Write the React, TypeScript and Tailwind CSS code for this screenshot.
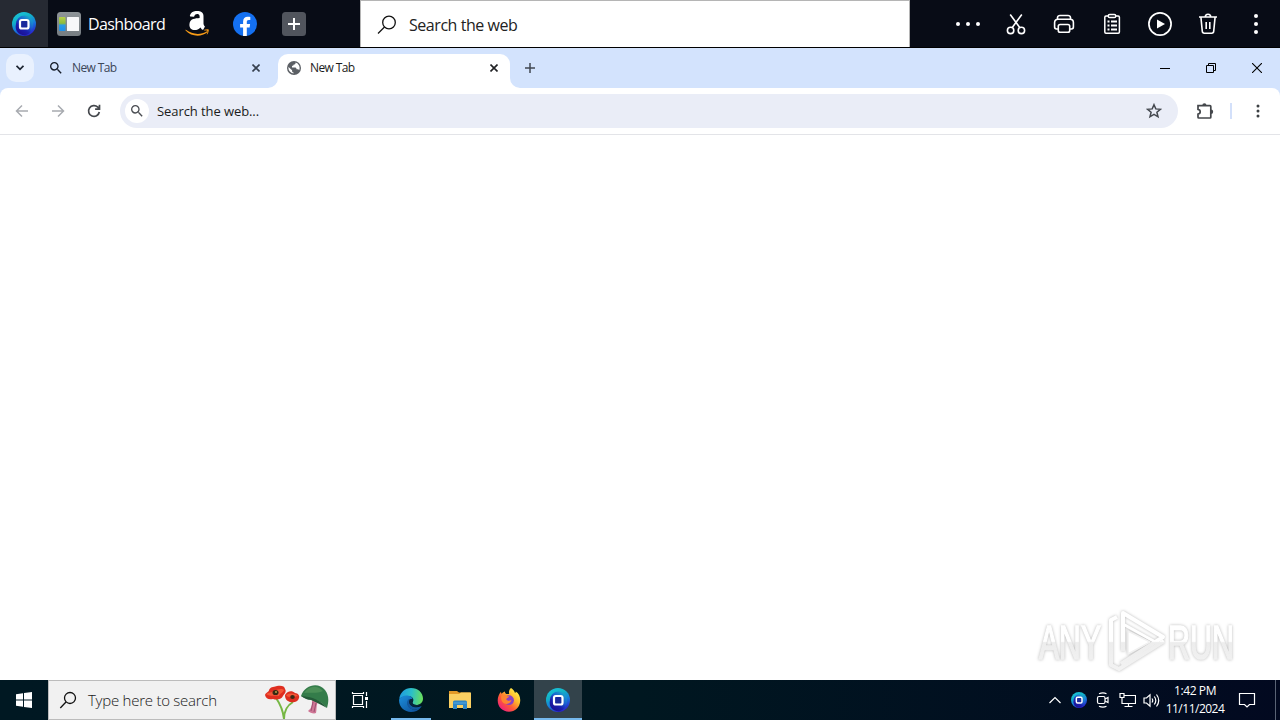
import type { ReactNode } from 'react';

type IconProps = { className?: string };

function Stroke({ className = '', size = 24, width = 1.6, children }: { className?: string; size?: number; width?: number; children: ReactNode }) {
  return (
    <svg className={`shrink-0 ${className}`} width={size} height={size} viewBox={`0 0 ${size} ${size}`} fill="none" stroke="currentColor" strokeWidth={width}>
      {children}
    </svg>
  );
}

function BrowserLogo({ id, size }: { id: string; size: number }) {
  return (
    <svg className="shrink-0" width={size} height={size} viewBox="0 0 24 24">
      <defs>
        <linearGradient id={`${id}-ring`} x1="0.200" y1="0" x2="0.650" y2="1">
          <stop offset="0" stopColor="#1cc3dc" />
          <stop offset="0.300" stopColor="#12b4c6" />
          <stop offset="0.600" stopColor="#1680da" />
          <stop offset="1" stopColor="#2b1ccc" />
        </linearGradient>
        <linearGradient id={`${id}-core`} x1="0.800" y1="0" x2="0.200" y2="0.900">
          <stop offset="0" stopColor="#18b0c8" />
          <stop offset="0.400" stopColor="#1b62d0" />
          <stop offset="0.700" stopColor="#1a1fae" />
          <stop offset="1" stopColor="#1c0f92" />
        </linearGradient>
      </defs>
      <circle cx="12" cy="12" r="12" fill={`url(#${id}-ring)`} />
      <path d="M4 12a8.500 8.500 0 0 1 17 0c0 6-3 10-8 11.500C6 23 2.500 18 4 12z" fill={`url(#${id}-core)`} />
      <rect x="8" y="8" width="8.500" height="8.500" rx="1.800" fill="#1a2a9c" stroke="#fff" strokeWidth="2.200" />
    </svg>
  );
}

function DashboardIcon() {
  return (
    <svg className="shrink-0" width="24" height="24" viewBox="0 0 24 24">
      <defs>
        <linearGradient id="dash" x1="0" y1="0" x2="0" y2="1">
          <stop offset="0" stopColor="#8e9498" />
          <stop offset="1" stopColor="#777d82" />
        </linearGradient>
        <linearGradient id="dash-tiles" x1="0" y1="0" x2="0" y2="1">
          <stop offset="0" stopColor="#b6cf4a" />
          <stop offset="0.450" stopColor="#8dbb3a" />
          <stop offset="0.580" stopColor="#2a9ae6" />
          <stop offset="1" stopColor="#1f8fe8" />
        </linearGradient>
      </defs>
      <rect width="24" height="24" rx="3.500" fill="url(#dash)" />
      <rect x="2" y="5" width="6.500" height="14" rx="1" fill="url(#dash-tiles)" />
      <rect x="10" y="5" width="12" height="14" rx="0.500" fill="#f7f7f9" />
    </svg>
  );
}

function AmazonIcon() {
  return (
    <svg className="shrink-0" width="24" height="26" viewBox="0 0 24 26">
      <path d="M14.600 10.600c0 1.500 0 2.700-.7 4-.6 1.100-1.500 1.700-2.500 1.700-1.400 0-2.200-1.100-2.200-2.600 0-3.100 2.800-3.700 5.400-3.700zm3.600 8.100c-.2.200-.6.200-.8.100-1.200-1-1.400-1.400-2-2.300-1.900 2-3.300 2.500-5.800 2.500-3 0-5.200-1.800-5.200-5.300 0-2.800 1.500-4.700 3.700-5.600 1.900-.8 4.500-1 6.500-1.200v-.5c0-.8.1-1.800-.4-2.500-.4-.7-1.200-.9-2-.9-1.300 0-2.500.7-2.800 2.100-.1.300-.3.600-.6.600L5.400 5.400c-.3-.1-.6-.3-.5-.8C5.700.900 9.100-.1 12.200-.1c1.600 0 3.600.4 4.900 1.600 1.600 1.500 1.400 3.400 1.400 5.600v5.100c0 1.500.6 2.200 1.200 3 .2.300.3.600 0 .8z" fill="#fff" />
      <path d="M.900 18.800c6.500 4.800 14.500 5.500 21 1.500.7-.4 1.200.4.500 1C16 26.500 6 25.600.600 19.500c-.4-.5-.1-.9.300-.7z" fill="#f79b16" />
      <path d="M19.300 18.800c1.200-.7 3.800-.9 4.300-.3.500.7-.2 3.800-1.500 5-.2.200-.5.100-.4-.2.400-1 1-2.900.7-3.400-.4-.5-2-.4-3-.3-.3 0-.5-.500-.1-.8z" fill="#f79b16" />
    </svg>
  );
}

function FacebookIcon() {
  return (
    <svg className="shrink-0" width="24" height="24" viewBox="0 0 24 24">
      <circle cx="12" cy="12" r="12" fill="#1470f0" />
      <path d="M10.100 23.900v-8.400H7.100v-3.500h3V9.400c0-3 1.800-4.700 4.500-4.700 1.300 0 2.700.2 2.700.2v3h-1.500c-1.500 0-2 .9-2 1.900V12h3.300l-.5 3.500h-2.800v8.400z" fill="#fff" />
    </svg>
  );
}

function PlusTile() {
  return (
    <svg className="shrink-0" width="24" height="24" viewBox="0 0 24 24">
      <rect width="24" height="24" rx="3.500" fill="#51555d" />
      <path d="M12 6v12M6 12h12" stroke="#fff" strokeWidth="2" />
    </svg>
  );
}

function ThinSearch({ className = '' }: IconProps) {
  return (
    <Stroke className={className} size={20} width={1.300}>
      <circle cx="12" cy="7.500" r="6.300" />
      <path d="M7.500 12L1 18.500" />
    </Stroke>
  );
}

function Magnifier({ size, color }: { size: number; color: string }) {
  return (
    <svg className="shrink-0" width={size} height={size} viewBox="3 3 18 18" fill={color}>
      <path d="M15.500 14h-.79l-.28-.27A6.470 6.470 0 0 0 16 9.500 6.500 6.500 0 1 0 9.500 16c1.610 0 3.090-.59 4.230-1.570l.27.28v.79l5 4.990L20.490 19l-4.990-5zm-6 0C7.010 14 5 11.990 5 9.500S7.010 5 9.500 5 14 7.010 14 9.500 11.990 14 9.500 14z" />
    </svg>
  );
}

function Dots() {
  return (
    <svg width="26" height="24" viewBox="0 0 26 24" fill="#fff">
      <circle cx="3" cy="12" r="2" /><circle cx="13" cy="12" r="2" /><circle cx="23" cy="12" r="2" />
    </svg>
  );
}

function Scissors() {
  return (
    <Stroke>
      <circle cx="6.600" cy="18.400" r="3.200" />
      <circle cx="17.400" cy="18.400" r="3.200" />
      <path d="M6.200 2.500l9.700 13.200M17.800 2.500L8.100 15.700" />
    </Stroke>
  );
}

function Printer() {
  return (
    <Stroke>
      <path d="M5.500 7V5.500Q5.800 3.500 8 3.500h8q2.200 0 2.500 2V7M6 17H4.500A2 2 0 0 1 2.600 15v-4.500a3.300 3.300 0 0 1 3.300-3.300h12.200a3.300 3.300 0 0 1 3.300 3.300V15a2 2 0 0 1-1.900 2H18" />
      <rect x="6.300" y="12.500" width="11.400" height="7.800" rx="1.800" />
    </Stroke>
  );
}

function Clipboard() {
  return (
    <Stroke width={1.500}>
      <rect x="4.800" y="4" width="14.600" height="17.200" rx="1.200" />
      <rect x="8.300" y="2.500" width="7.400" height="3" rx="1.300" fill="#080c16" />
      <path d="M7.500 9.500h2M7.500 13.500h2M7.500 17.500h2M11 9.500h6M11 13.500h6M11 17.500h6" strokeWidth="1.800" />
    </Stroke>
  );
}

function PlayCircle() {
  return (
    <Stroke width={1.700}>
      <circle cx="12" cy="12" r="11.100" />
      <path d="M9 7.500v9l8-4.500z" fill="#fff" stroke="none" />
    </Stroke>
  );
}

function Trash() {
  return (
    <Stroke>
      <path d="M3 5h18M9.300 5a2.700 2.700 0 0 1 5.400 0M4.900 5l1.400 14.300a2 2 0 0 0 2 1.900h7.400a2 2 0 0 0 2-1.900L19.100 5M10.200 10v7M13.800 10v7" />
    </Stroke>
  );
}

function VerticalDots() {
  return (
    <svg width="24" height="24" viewBox="0 0 24 24" fill="#fff">
      <circle cx="12" cy="4" r="2" /><circle cx="12" cy="12" r="2" /><circle cx="12" cy="20" r="2" />
    </svg>
  );
}

function CloseIcon({ color }: { color: string }) {
  return (
    <svg className="shrink-0" width="8" height="8" viewBox="0 0 8 8" stroke={color} strokeWidth="1.600">
      <path d="M.500.500l7 7M7.500.500l-7 7" />
    </svg>
  );
}

function TabFoot({ side }: { side: 'left' | 'right' }) {
  return (
    <svg className="shrink-0 self-end" width="10" height="10" viewBox="0 0 10 10" fill="#fff">
      <path d={side === 'left' ? 'M10 0v10H0A10 10 0 0 0 10 0z' : 'M0 0v10h10A10 10 0 0 1 0 0z'} />
    </svg>
  );
}

function Slot({ children, className = '' }: { children: ReactNode; className?: string }) {
  return <div className={`flex h-full w-12 shrink-0 items-center justify-center ${className}`}>{children}</div>;
}

function Launcher() {
  return (
    <header className="flex h-12 shrink-0 border-b border-black bg-[#080c16] text-white">
      <Slot className="bg-[#262a33] pt-px"><BrowserLogo id="launch" size={24} /></Slot>
      <div className="flex w-[125px] items-center gap-[7px] pl-[9px] pt-px">
        <DashboardIcon />
        <span className="whitespace-nowrap font-['Open_Sans',sans-serif] text-[16px] tracking-[-0.600px]">Dashboard</span>
      </div>
      <Slot className="pt-px"><AmazonIcon /></Slot>
      <Slot className="pt-px"><FacebookIcon /></Slot>
      <Slot className="ml-px pt-px"><PlusTile /></Slot>
      <div className="ml-[42px] flex w-[550px] items-center gap-[12px] border-l border-r border-t border-[#b5b5b5] bg-white pl-[16px] pt-px text-[#222]">
        <ThinSearch className="text-[#111]" />
        <span className="pt-px font-['Open_Sans',sans-serif] text-[16px] tracking-[-0.450px]">Search the web</span>
      </div>
      <div className="ml-auto flex pt-px">
        <Slot><Dots /></Slot>
        <Slot><Scissors /></Slot>
        <Slot><Printer /></Slot>
        <Slot><Clipboard /></Slot>
        <Slot><PlayCircle /></Slot>
        <Slot><Trash /></Slot>
        <Slot><VerticalDots /></Slot>
      </div>
    </header>
  );
}

function TabStrip() {
  return (
    <div className="flex h-10 shrink-0 items-center bg-[#d3e3fd]">
      <button className="ml-[6px] flex h-7 w-7 items-center justify-center rounded-[10px] bg-[#e9f1fe]">
        <svg width="8" height="6" viewBox="0 0 8 6" fill="none" stroke="#1c2430" strokeWidth="1.800"><path d="M.500.800L4 4.300 7.500.800" /></svg>
      </button>
      <div className="ml-[16px] flex w-[210px] items-center">
        <Magnifier size={12} color="#161c28" />
        <span className="ml-[10px] font-['Open_Sans',sans-serif] text-[12px] tracking-[-0.600px] text-[#3b4658]">New Tab</span>
        <span className="ml-auto"><CloseIcon color="#36404f" /></span>
      </div>
      <div className="ml-2 flex h-full">
        <TabFoot side="left" />
        <div className="mt-[6px] flex w-[232px] items-center rounded-t-[10px] bg-white pb-[6px] pl-[9px] pr-[12px]">
          <svg className="shrink-0" width="14" height="14" viewBox="0 0 14 14">
            <circle cx="7" cy="7" r="7" fill="#5b5f64" />
            <path d="M8.500 1.600c.2 1.300-.6 1.900-1.800 2-.2 1-.6 1.400-1.700 1.500v1.300h3.400c.8.200 1.200.9 1.200 1.900h1.200c.7.100 1 .5 1.300 1A5.600 5.600 0 0 0 8.500 1.600zM1.500 6l3.600 3.300v1c.1.900.700 1.100 1.400 1.200v1A5.600 5.600 0 0 1 1.500 6z" fill="#fff" />
          </svg>
          <span className="ml-[9px] font-['Open_Sans',sans-serif] text-[12px] tracking-[-0.600px] text-[#1b1b1b]">New Tab</span>
          <span className="ml-auto"><CloseIcon color="#202124" /></span>
        </div>
        <TabFoot side="right" />
      </div>
      <svg className="ml-[5px]" width="10" height="10" viewBox="0 0 10 10" stroke="#414852" strokeWidth="1.500"><path d="M5 0v10M0 5h10" /></svg>
      <div className="ml-auto flex">
        <div className="flex w-[46px] justify-center"><svg width="10" height="10" viewBox="0 0 10 10" stroke="#000"><path d="M0 5.500h10" /></svg></div>
        <div className="flex w-[46px] justify-center"><svg width="10" height="10" viewBox="0 0 10 10" stroke="#000" fill="none"><path d="M.500 2.500h7v7h-7zM2.500 2.500v-2h7v7h-2" /></svg></div>
        <div className="flex w-[46px] justify-center"><svg width="10" height="10" viewBox="0 0 10 10" stroke="#000" strokeWidth="1.100"><path d="M0 0l10 10M10 0L0 10" /></svg></div>
      </div>
    </div>
  );
}

function Toolbar() {
  return (
    <div className="shrink-0 bg-[#d3e3fd]">
      <div className="flex h-[47px] items-center rounded-t-[8px] border-b border-[#e3e4e8] bg-white">
        <Stroke className="ml-[15px] text-[#a8abb0]" size={14} width={1.500}><path d="M13 7H2M7 1.500L1.500 7 7 12.500" /></Stroke>
        <Stroke className="ml-[22px] text-[#a8abb0]" size={14} width={1.500}><path d="M1 7h11M7 1.500L12.500 7 7 12.500" /></Stroke>
        <Stroke className="ml-[22px] text-[#45484d]" size={14} width={1.700}><path d="M12.300 8A5.400 5.400 0 1 1 10.800 3.200L12.300 4.700M12.500.800v4.400H8.100" /></Stroke>
        <div className="ml-[19px] flex h-[34px] w-[1058px] items-center rounded-full bg-[#eaedf7] pl-[5px] pr-[16px]">
          <span className="flex h-6 w-6 items-center justify-center rounded-full bg-white"><Magnifier size={12} color="#4a4d52" /></span>
          <span className="ml-2 pt-px font-['Open_Sans',sans-serif] text-[13px] tracking-[-0.080px] text-[#1b1c20]">Search the web...</span>
          <Stroke className="ml-auto text-[#44484f]" size={16} width={1.500}><path d="M8 1.700l1.800 4.200 4.600.4-3.500 3 1.100 4.500L8 11.400l-4 2.400 1.100-4.500-3.500-3 4.600-.4z" /></Stroke>
        </div>
        <Stroke className="ml-[18px] text-[#44474b]" size={18} width={1.700}>
          <path d="M2 3.600h12q.8 0 .8.800v10.800q0 .8-.8.800H2.800q-.8 0-.8-.8v-3q2.200-.4 2.200-2.400T2 7.400z" />
          <path d="M6.300 3.400a2.100 2.100 0 0 1 4.200 0zM15 7.600a2.200 2.200 0 0 1 0 4.400z" fill="currentColor" stroke="none" />
        </Stroke>
        <span className="ml-[16px] h-4 w-[2px] bg-[#d3e0fa]" />
        <svg className="ml-[24px]" width="4" height="14" viewBox="0 0 4 14" fill="#3c4043"><circle cx="2" cy="2" r="1.500" /><circle cx="2" cy="7" r="1.500" /><circle cx="2" cy="12" r="1.500" /></svg>
      </div>
    </div>
  );
}

function Watermark() {
  return (
    <svg className="absolute bottom-[7px] right-[30px] drop-shadow-[0_0_1.500px_rgba(0,0,0,0.280)]" width="214" height="66" viewBox="0 0 214 66">
      <defs>
        <linearGradient id="mark" gradientUnits="userSpaceOnUse" x1="0" y1="0" x2="0" y2="66">
          <stop offset="0" stopColor="#fff" />
          <stop offset="0.520" stopColor="#fff" />
          <stop offset="0.540" stopColor="#ededed" />
          <stop offset="1" stopColor="#f3f3f3" />
        </linearGradient>
      </defs>
      <g fill="url(#mark)" stroke="url(#mark)" strokeWidth="1.500" fontFamily="Liberation Sans Narrow, Liberation Sans, sans-serif" fontSize="49">
        <text x="3" y="52" textLength="62" lengthAdjust="spacingAndGlyphs">ANY</text>
        <text x="132" y="52" textLength="66" lengthAdjust="spacingAndGlyphs">RUN</text>
      </g>
      <g fill="none" stroke="url(#mark)" strokeWidth="4" strokeLinejoin="round">
        <path d="M87 44V6l40 24-42 27" />
        <path d="M81 10l-6 3v45l8 4 45-28" />
        <path d="M87 17l36 20" strokeWidth="3" />
        <path d="M92 24v23l22-12z" fill="#fff" stroke="#f1f1f1" strokeWidth="1.500" />
      </g>
    </svg>
  );
}

function Flowers() {
  return (
    <svg className="shrink-0" width="66" height="34" viewBox="0 0 66 34">
      <path d="M12 13c5 7 7 12 8 21M29 17c-7 4-9 10-9 17" stroke="#76b744" strokeWidth="2" fill="none" />
      <path d="M1 10c1-3 4-3 4-5 2-4 6-3 8-4 4-1 8 0 8 3 2 3-1 5-2 7-2 4-7 4-10 3-4 1-7 0-8-4z" fill="#df2e20" />
      <path d="M2 9c3-2 5-1 8-3 4-2 8-3 10-1-1 3-4 3-5 6-4-1-8 1-13-2z" fill="#f45738" />
      <ellipse cx="11.500" cy="7.500" rx="3" ry="2.600" fill="#382914" /><circle cx="12" cy="7" r="1" fill="#b6a344" />
      <path d="M21 10c2-4 7-5 10-2 3 0 5 3 4 5-1 4-5 5-9 4-3-1-5-3-5-7z" fill="#dc2f20" />
      <path d="M22 10c4-2 8-2 12 1-3 0-4 2-6 2-2-2-4 0-6-3z" fill="#f45738" />
      <ellipse cx="28.500" cy="12" rx="2.300" ry="2" fill="#382914" />
      <path d="M48 15l6 2c-2 3-1 7-2 11-2 1-6 0-8-2 4-3 4-6 4-11z" fill="#cf7695" />
      <path d="M49 17l-2 9M52 18l-2 9" stroke="#9a5272" fill="none" />
      <path d="M37 11C41-1 55-3 61 5c4 5 4 11 2 18-5-6-10-8-16-9-4 0-7-1-10-3z" fill="#347c4a" />
      <path d="M40 8C45 0 54 0 59 6c-7 3-13 1-19 2z" fill="#4b8f57" />
      <path d="M37 11c7 1 17 1 26 12-5-3-10-5-16-8-4 0-7-2-10-4z" fill="#245b39" />
    </svg>
  );
}

function EdgeIcon() {
  return (
    <svg width="24" height="24" viewBox="0 0 24 24">
      <defs>
        <linearGradient id="edge-top" x1="0" y1="0.400" x2="1" y2="0.500"><stop offset="0" stopColor="#1f9be0" /><stop offset="0.500" stopColor="#2bbfc9" /><stop offset="1" stopColor="#6be05a" /></linearGradient>
        <linearGradient id="edge-low" x1="0" y1="0" x2="1" y2="1"><stop offset="0" stopColor="#1c8fdc" /><stop offset="1" stopColor="#0d4b94" /></linearGradient>
      </defs>
      <path d="M.200 11C1 4.500 6 0 12 0c7 0 12 4.800 12 10.500 0 4-3 6.500-6.500 6.500-2.800 0-4.500-1.200-4-2.500 2-2.500.6-6.500-4.500-6.500C4.500 8 1.500 9.500.200 11z" fill="url(#edge-top)" />
      <path d="M.100 11.500C1.500 8.800 5 7 8.500 7.500c3 .2 5 2 5.200 4-4-1-5.700 2-4.700 5.500 1 3.500 5 5.500 9.500 4l3.300-1.500C19.500 22.500 16 24 12 24 5.200 24-.500 18.500.100 11.500z" fill="url(#edge-low)" />
      <path d="M9 11.800c-2.500 4 0 9.500 6 9.900 3 .1 6-1.200 7.500-3 .2-.4-.2-.6-.6-.4-5 2.400-11.500.2-11.500-4.300 0-1.500.9-2.300 1.800-2.700-1-.5-2.400-.3-3.200.5z" fill="#12589f" />
      <path d="M10.500 12c1-1.500 3.200-1 3.400.5.100 1-.8 1.600-.4 2.600.6 1.300 2.600 2 4.500 1.900 1.800 0 3.500-.7 4.600-1.900-1.600 3.200-4.200 4.300-7 3.900-4-.6-6.400-4-5.100-7z" fill="#07243d" />
    </svg>
  );
}

function FolderIcon() {
  return (
    <svg width="22" height="20" viewBox="0 0 22 20">
      <path d="M0 1h8l2 1.500h11v6H0z" fill="#e39a28" />
      <path d="M0 4h10l2-1.500h10V18H0z" fill="#fbd062" />
      <path d="M4 12q0-1.500 1.500-1.500h11q1.500 0 1.500 1.500v7h-4v-4H8v4H4z" fill="#2f86c6" />
      <path d="M4.500 13h13" stroke="#58a8dd" />
    </svg>
  );
}

function FirefoxIcon() {
  return (
    <svg width="24" height="24" viewBox="0 0 24 24">
      <defs>
        <linearGradient id="fox" x1="0.850" y1="0.100" x2="0.150" y2="0.900"><stop offset="0" stopColor="#fff04a" /><stop offset="0.350" stopColor="#ffb52b" /><stop offset="0.650" stopColor="#ff5a36" /><stop offset="1" stopColor="#f0207c" /></linearGradient>
      </defs>
      <path d="M14 0c2 1 3.500 3 4 5 1-.2.800-1 .7-1.500C22 5.500 23.500 9 23.200 13 22.800 19.500 18 23.700 12 23.700 5.500 23.700.700 19 .700 12.500.700 9 2 6 4 3.700c0 1 .3 1.700.7 2C6 4.500 7 4 8 3.600c-.2 1 .2 1.700 1.200 2.300h3C11.500 3.500 12.500 1.200 14 0z" fill="url(#fox)" />
      <circle cx="12" cy="12.200" r="4.900" fill="#8a41c4" />
      <path d="M4.500 7.500c2-1.200 4-.5 5 .4 1 .2 2 .2 2.800.3-.2 1.300-2.800 1.500-3 3 .6 1.700 3.400 2 5.200.6-.7 3.600-4.400 5.200-7.600 3.500C4.500 13.800 3.500 10.500 4.500 7.500z" fill="#ff8430" />
    </svg>
  );
}

function TaskItem({ children, open = false, active = false }: { children: ReactNode; open?: boolean; active?: boolean }) {
  return (
    <div className={`flex h-full w-12 shrink-0 flex-col items-center ${active ? 'bg-[#33434b]' : ''}`}>
      <div className="flex flex-1 items-center pt-[2px]">{children}</div>
      <div className={`h-[2px] ${active ? 'w-full' : 'w-10'} ${open || active ? 'bg-[#76b9ed]' : ''}`} />
    </div>
  );
}

function Taskbar() {
  return (
    <footer className="flex h-10 shrink-0 items-center bg-gradient-to-r from-[#001822] via-[#001720] to-[#020920] text-white">
      <Slot>
        <svg width="16" height="16" viewBox="0 0 16 16" fill="#fff"><path d="M0 2.200l7-1v6.300H0zM8 1.100L16 0v7.500H8zM0 8.500h7v6.300l-7-1zM8 8.500h8V16l-8-1.100z" /></svg>
      </Slot>
      <div className="flex h-10 w-[288px] items-center border border-[#bcbcbc] bg-[#f1f1f1] pl-[10px] pr-[5px]">
        <svg className="shrink-0" width="18" height="18" viewBox="0 0 18 18" fill="none" stroke="#111" strokeWidth="1.300"><circle cx="11" cy="7" r="5.500" /><path d="M7 11l-5.700 6" /></svg>
        <span className="ml-[11px] pt-px font-['Open_Sans',sans-serif] text-[15px] font-light tracking-[-0.250px] text-[#202020]">Type here to search</span>
        <span className="ml-auto pt-[4px]"><Flowers /></span>
      </div>
      <Slot>
        <Stroke size={18} width={1.200}><path d="M2.500 4.500h9v9h-9zM1.500 1v1.500h11V1M1.500 17v-1.500h11V17M15.500 1v4M15.500 10v7" /><path d="M14 6h3v3h-3z" fill="#fff" stroke="none" /></Stroke>
      </Slot>
      <div className="ml-[3px] flex h-full">
        <TaskItem open><EdgeIcon /></TaskItem>
        <div className="ml-px flex"><TaskItem><FolderIcon /></TaskItem></div>
        <div className="ml-px flex"><TaskItem><FirefoxIcon /></TaskItem></div>
        <div className="ml-px flex"><TaskItem active><BrowserLogo id="task" size={24} /></TaskItem></div>
      </div>
      <div className="ml-auto flex h-full items-center">
        <svg width="12" height="8" viewBox="0 0 12 8" fill="none" stroke="#fff" strokeWidth="1.200"><path d="M.500 7L6 1.500 11.500 7" /></svg>
        <span className="ml-[10px]"><BrowserLogo id="tray" size={16} /></span>
        <Stroke className="ml-2" size={16} width={1.200}><rect x="2.500" y="4.500" width="7.500" height="7" rx="1.500" /><path d="M10 7l3-1.500v5L10 9M4 1.700Q8 0 11.500 1.700M4 14.300q4 1.700 7.500 0" /></Stroke>
        <Stroke className="ml-2" size={17} width={1.200}><path d="M5.500 3.500h11v8h-12M9.500 11.500v3M5.500 14.500h8M1 1.500h4v4H1zM3 5.500v6h2" /></Stroke>
        <Stroke className="ml-[7px]" size={17} width={1.200}><path d="M1 6h2.500L7 2.800v11.400L3.500 11H1zM9 6.500q1.500 2 0 4M11.300 4.500q3 4 0 8M13.500 2.500q4.500 6 0 12" /></Stroke>
        <div className="ml-[2px] flex w-[66px] flex-col items-center whitespace-nowrap pb-px font-['Open_Sans',sans-serif] text-[12px] leading-[18px]">
          <span className="tracking-[-0.400px]">1:42 PM</span>
          <span className="tracking-[-0.500px]">11/11/2024</span>
        </div>
        <Stroke className="ml-[10px]" size={18} width={1.200}><path d="M1.500 2.500h15v11h-5L9 16l-2.500-2.500h-5z" /></Stroke>
        <span className="ml-[19px] h-full w-px bg-[#5a6375]" />
        <span className="w-1" />
      </div>
    </footer>
  );
}

export default function App() {
  return (
    <div className="flex h-[720px] w-[1280px] flex-col overflow-hidden bg-white font-['Open_Sans',sans-serif]">
      <Launcher />
      <TabStrip />
      <Toolbar />
      <main className="relative flex-1 bg-white">
        <Watermark />
      </main>
      <Taskbar />
    </div>
  );
}
